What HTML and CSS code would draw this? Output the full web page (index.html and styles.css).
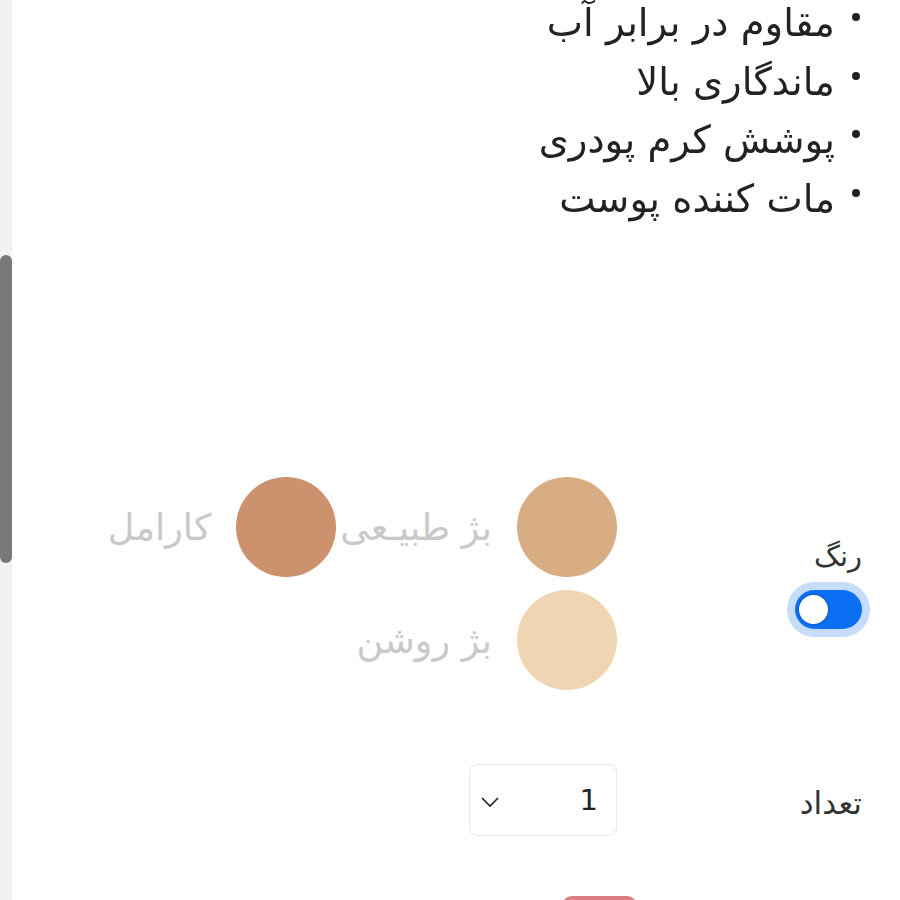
FILE: index.html
```html
<!DOCTYPE html>
<html lang="fa" dir="rtl">
<head>
<meta charset="utf-8">
<link rel="stylesheet" href="styles.css">
</head>
<body>
<div class="scrollbar"><div class="thumb"></div></div>
<main class="page">
  <ul class="features">
    <li>مقاوم در برابر آب</li>
    <li>ماندگاری بالا</li>
    <li>پوشش کرم پودری</li>
    <li>مات کننده پوست</li>
  </ul>

  <div class="form-row color-row">
    <div class="label-col">
      <div class="label">رنگ</div>
      <div class="switch"><span class="knob"></span></div>
    </div>
    <div class="swatches">
      <div class="swatch"><span class="dot natural"></span><span class="swatch-name">بژ طبیـعی</span></div>
      <div class="swatch"><span class="dot caramel"></span><span class="swatch-name">کارامل</span></div>
      <div class="swatch"><span class="dot light"></span><span class="swatch-name">بژ روشن</span></div>
    </div>
  </div>

  <div class="form-row qty-row">
    <div class="label-col">
      <div class="label qty-label">تعداد</div>
    </div>
    <div class="select">
      <span class="value">1</span>
      <svg class="chev" width="20" height="12" viewBox="0 0 20 12"><path d="M2 2 L10 10 L18 2" fill="none" stroke="#222" stroke-width="1.6"/></svg>
    </div>
  </div>

  <div class="button-peek"></div>
</main>
</body>
</html>
```

FILE: styles.css
```css
html, body {
  margin: 0;
  padding: 0;
  background: #fff;
  overflow: hidden;
}
body {
  font-family: "DejaVu Sans", "Noto Sans", sans-serif;
  color: #222;
  direction: rtl;
}
.scrollbar {
  position: fixed;
  left: 0;
  top: 0;
  width: 12px;
  height: 100%;
  background: #f1f1f1;
}
.thumb {
  position: absolute;
  left: 0;
  top: 255px;
  width: 12px;
  height: 308px;
  border-radius: 6px;
  background: #787878;
}
.page {
  width: 900px;
}
.features {
  margin: -6px 0 0;
  padding: 0 65px 0 0;
  font-size: 38.5px;
  line-height: 58.5px;
  list-style: none;
}
.features li {
  position: relative;
}
.features li::before {
  content: "";
  position: absolute;
  right: -25px;
  top: 19px;
  width: 8px;
  height: 8px;
  border-radius: 50%;
  background: #222;
}
.form-row {
  display: grid;
  grid-template-columns: 283px 1fr;
  align-items: center;
}
.color-row {
  margin-top: 249px;
}
.label-col {
  padding-right: 38px;
  display: flex;
  flex-direction: column;
  align-items: flex-start;
}
.label {
  font-size: 29px;
  color: #333;
  line-height: 36px;
}
.switch {
  margin-top: 16px;
  width: 67px;
  height: 39px;
  border-radius: 20px;
  background: #0b6ff4;
  box-shadow: 0 0 0 8px #c6dcfb;
  position: relative;
  direction: ltr;
}
.knob {
  position: absolute;
  left: 4px;
  top: 5px;
  width: 29px;
  height: 29px;
  border-radius: 50%;
  background: #fff;
  box-shadow: 0 0 0 1.5px #0a5fd6;
}
.swatches {
  display: flex;
  flex-wrap: wrap;
  column-gap: 4px;
  row-gap: 13px;
}
.swatch {
  display: flex;
  align-items: center;
  gap: 25px;
}
.dot {
  width: 100px;
  height: 100px;
  border-radius: 50%;
  flex: none;
}
.natural { background: #d9ad83; }
.caramel { background: #cc916d; }
.light { background: #f0d5b2; }
.swatch-name {
  font-size: 36.5px;
  color: #c9c9c9;
}
.qty-row {
  margin-top: 74px;
}
.qty-label {
  font-size: 31px;
  padding-top: 6px;
}
.select {
  width: 148px;
  height: 72px;
  box-sizing: border-box;
  border: 1.5px solid #e8e8e8;
  border-radius: 8px;
  display: flex;
  align-items: center;
  justify-content: space-between;
  padding: 0 18px 0 10px;
}
.value {
  font-size: 29px;
  color: #222;
}
.chev {
  display: block;
  margin-top: 4px;
}
.button-peek {
  margin: 60px 263px 0 0;
  width: 75px;
  height: 40px;
  background: #dc7c83;
  border-radius: 10px 10px 0 0;
}
```
